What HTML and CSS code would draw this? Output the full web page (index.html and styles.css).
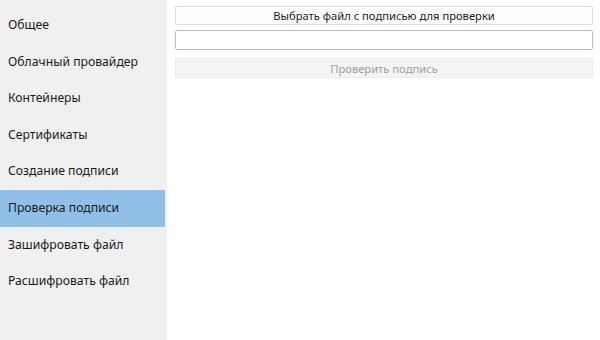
FILE: index.html
```html
<!DOCTYPE html>
<html lang="ru">
<head>
    <meta charset="UTF-8">
    <meta name="viewport" content="width=device-width, initial-scale=1.0">
    <title>Проверка подписи</title>
    <link rel="stylesheet" href="styles.css">
</head>
<body>
    <div class="app">
        <!-- Navigation -->
        <ul class="nav">
            <li class="nav-item">Общее</li>
            <li class="nav-item">Облачный провайдер</li>
            <li class="nav-item">Контейнеры</li>
            <li class="nav-item">Сертификаты</li>
            <li class="nav-item">Создание подписи</li>
            <li class="nav-item active">Проверка подписи</li>
            <li class="nav-item">Зашифровать файл</li>
            <li class="nav-item">Расшифровать файл</li>
        </ul>

        <div class="content">
            <button class="btn">Выбрать файл с подписью для проверки</button>
            <input type="text" class="field">
            <button class="btn" disabled>Проверить подпись</button>
        </div>
    </div>
</body>
</html>
```
FILE: styles.css
```css
html, body {
    margin: 0;
    height: 100%;
    background-color: #fff;
    font-family: "Noto Sans", "Open Sans", sans-serif;
}
.app {
    display: flex;
    height: 100%;
}
.nav {
    list-style: none;
    margin: 0;
    padding: 7px 2px 0 0;
    width: 165px;
    background-color: #f0f0f0;
}
.nav-item {
    height: 36.6px;
    line-height: 36px;
    padding-left: 8px;
    font-size: 12.2px;
    color: #1a1a1a;
}
.nav-item.active {
    background-color: #90c0e8;
}
.content {
    flex: 1;
    display: flex;
    flex-direction: column;
    padding: 6px 7px 0 8px;
}
.btn {
    height: 19px;
    padding: 0;
    border: 1px solid #dcdcdc;
    border-radius: 2px;
    background-color: #fdfdfd;
    font-family: inherit;
    font-size: 11.2px;
    color: #1a1a1a;
}
.btn:disabled {
    margin-top: 8px;
    height: 20px;
    border-color: #ececec;
    background-color: #f4f4f4;
    color: #a0a0a0;
}
.field {
    margin-top: 5px;
    height: 20px;
    box-sizing: border-box;
    border: 1px solid #bdbdbd;
    border-radius: 2px;
    padding: 0 4px;
}
```
